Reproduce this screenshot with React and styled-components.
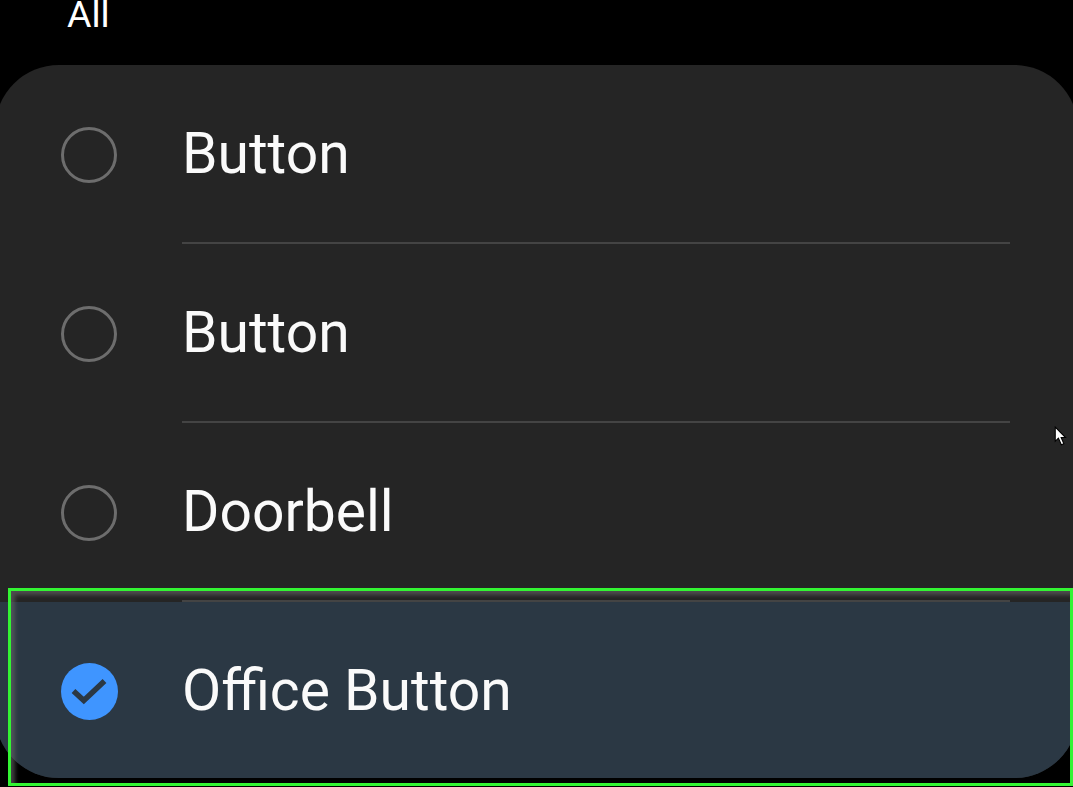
import { Fragment } from "react";
import styled, { createGlobalStyle } from "styled-components";

const GlobalStyle = createGlobalStyle`
  html, body {
    margin: 0;
    padding: 0;
    background: #000;
    font-family: Roboto, "Liberation Sans", sans-serif;
  }
`;

const items = [
  { name: "Button" },
  { name: "Button" },
  { name: "Doorbell" },
  { name: "Office Button", selected: true },
];

const App = () => {
  return (
    <Page>
      <GlobalStyle />
      <Heading>All</Heading>
      <Card>
        {items.map((item, index) => (
          <Fragment key={index}>
            <Row $selected={item.selected}>
              {item.selected ? (
                <CheckIcon viewBox="0 0 57 57">
                  <circle cx="28.5" cy="28.5" r="28.5" fill="#3f95ff" />
                  <path d="M12.5 28 L22.8 37.5 L43.5 18" fill="none" stroke="#2b3844" strokeWidth="5.5" />
                </CheckIcon>
              ) : (
                <Radio />
              )}
              <Label>{item.name}</Label>
            </Row>
            {index < items.length - 1 && <Divider />}
          </Fragment>
        ))}
      </Card>
      <FocusBox />
      <Cursor viewBox="0 0 12 19">
        <path d="M1 1 V14.5 L4 11.5 L6.8 17.8 L9.2 16.8 L6.6 11 H10.8 Z" fill="#fff" stroke="#000" strokeWidth="1" />
      </Cursor>
    </Page>
  );
};
export default App;

const Page = styled.div`
  position: relative;
  width: 1073px;
  height: 787px;
  overflow: hidden;
  background: #000;
`;

const Heading = styled.div`
  height: 69px;
  margin-top: -4px;
  padding-left: 67px;
  font-size: 37.5px;
  line-height: 37px;
  color: #fff;
`;

const Card = styled.div`
  display: flex;
  flex-direction: column;
  width: 1083px;
  margin-left: -5px;
  border-radius: 64px;
  overflow: hidden;
  background: #252525;
`;

const Row = styled.div`
  display: grid;
  grid-template-columns: 57px 1fr;
  column-gap: 64px;
  align-items: center;
  height: ${(props) => (props.$selected ? "176px" : "177px")};
  padding: 2px 0 0 66px;
  box-sizing: border-box;
  background: ${(props) => (props.$selected ? "#2b3844" : "transparent")};
`;

const Radio = styled.span`
  width: 56px;
  height: 56px;
  box-sizing: border-box;
  border: 3px solid #6d6d6d;
  border-radius: 50%;
`;

const CheckIcon = styled.svg`
  width: 57px;
  height: 57px;
`;

const Label = styled.span`
  padding-bottom: 2px;
  font-size: 57px;
  color: #fafafa;
`;

const Divider = styled.div`
  width: 828px;
  height: 2px;
  margin-left: 187px;
  background: #444;
`;

const FocusBox = styled.div`
  position: absolute;
  left: 8px;
  top: 588px;
  width: 1065px;
  height: 198px;
  box-sizing: border-box;
  border: 3px solid #33f533;
  box-shadow: inset 7px 7px 4px -3px rgba(100, 100, 100, 0.65);
  pointer-events: none;
`;

const Cursor = styled.svg`
  position: absolute;
  left: 1054px;
  top: 426px;
  width: 13px;
  height: 20px;
`;
